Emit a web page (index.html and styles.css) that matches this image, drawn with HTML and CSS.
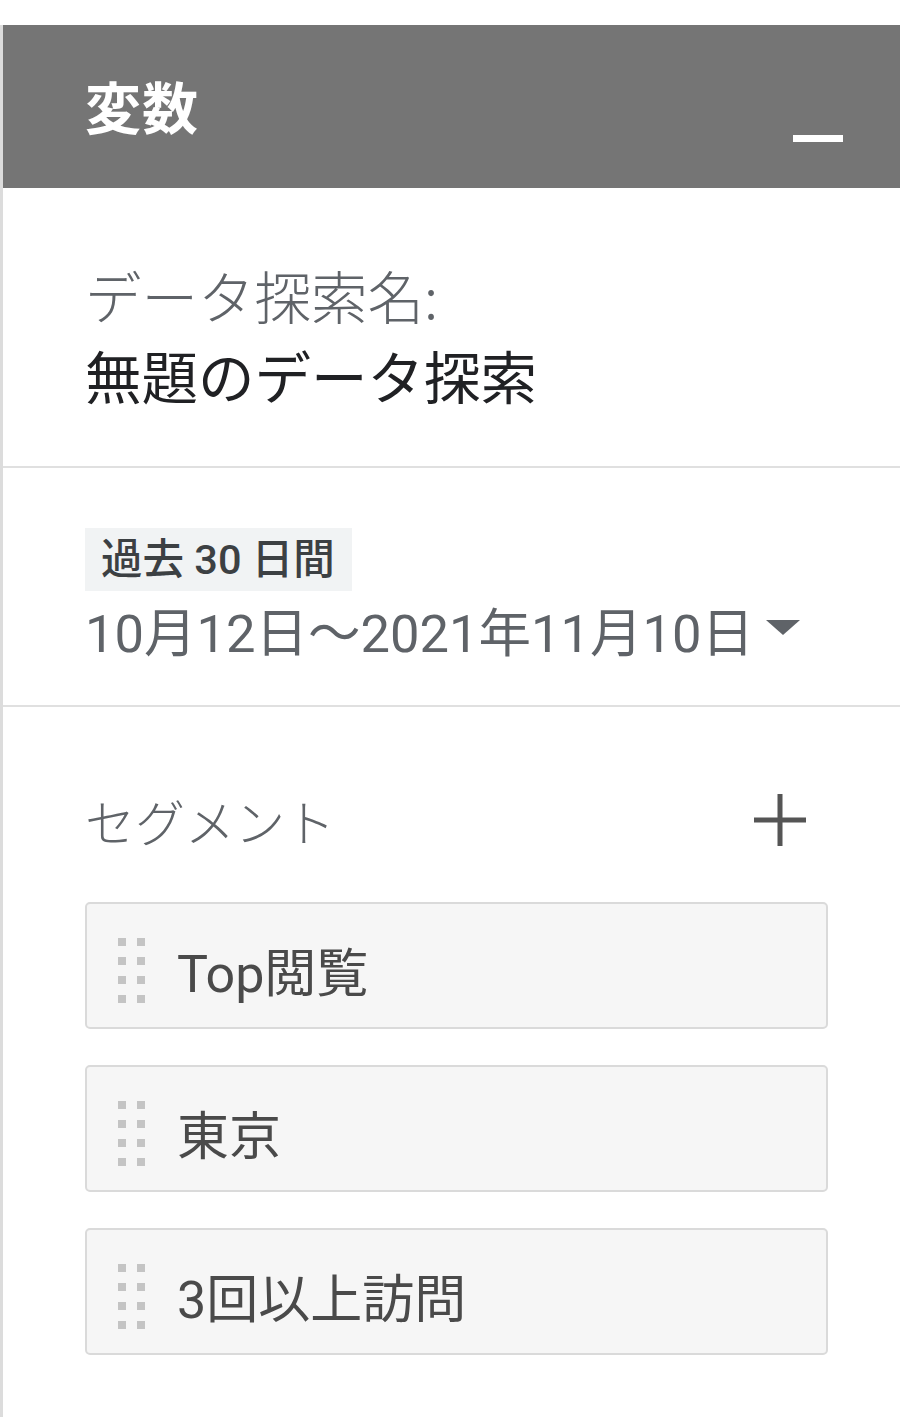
FILE: index.html
```html
<!DOCTYPE html>
<html lang="ja">
<head>
<meta charset="utf-8">
<title>変数</title>
<link rel="stylesheet" href="styles.css">
</head>
<body>
<div class="panel">
  <div class="header">
    <div class="title">変数</div>
    <div class="minimize"></div>
  </div>
  <div class="section name-section">
    <div class="label">データ探索名:</div>
    <div class="name">無題のデータ探索</div>
  </div>
  <div class="section date-section">
    <div class="chip">過去 30 日間</div>
    <div class="date">10月12日～2021年11月10日<span class="caret"></span></div>
  </div>
  <div class="section segment-section">
    <div class="seg-head">
      <div class="seg-title">セグメント</div>
      <svg class="plus" width="56" height="56" viewBox="0 0 56 56"><path d="M28 2v52M2 28h52" stroke="#555" stroke-width="5" fill="none"/></svg>
    </div>
    <div class="cards">
      <div class="card"><span class="handle"><i></i><i></i><i></i><i></i><i></i><i></i><i></i><i></i></span><span class="card-text">Top閲覧</span></div>
      <div class="card"><span class="handle"><i></i><i></i><i></i><i></i><i></i><i></i><i></i><i></i></span><span class="card-text">東京</span></div>
      <div class="card"><span class="handle"><i></i><i></i><i></i><i></i><i></i><i></i><i></i><i></i></span><span class="card-text">3回以上訪問</span></div>
    </div>
  </div>
</div>
</body>
</html>
```
FILE: styles.css
```css
html, body {
  margin: 0;
  padding: 0;
  background: #ffffff;
}
body {
  font-family: Roboto, "Noto Sans CJK JP", sans-serif;
}
.panel {
  margin-top: 25px;
  border-left: 3px solid #dcdcdc;
  min-height: 1392px;
  box-sizing: border-box;
}
.header {
  height: 163px;
  background: #757575;
  display: flex;
  justify-content: space-between;
  align-items: center;
  padding: 0 57px 0 82px;
  box-sizing: border-box;
}
.title {
  color: #ffffff;
  font-family: "Noto Sans CJK JP", sans-serif;
  font-weight: 700;
  font-size: 56px;
  line-height: 60px;
  letter-spacing: 1px;
  margin-top: -4px;
}
.minimize {
  width: 50px;
  height: 7px;
  background: #ffffff;
  align-self: flex-end;
  margin-bottom: 46px;
}
.section {
  border-bottom: 2px solid #e0e0e0;
  padding-left: 82px;
}
.name-section {
  padding-top: 66px;
  padding-bottom: 52px;
}
.label, .name {
  font-family: "Noto Sans CJK JP", sans-serif;
  font-size: 56.5px;
  line-height: 80px;
  font-weight: 300;
}
.label {
  color: #5f6368;
}
.name {
  color: #202124;
  font-weight: 400;
}
.date-section {
  padding-top: 60px;
  padding-bottom: 38px;
}
.chip {
  display: inline-block;
  background: #f1f3f4;
  color: #3c4043;
  font-size: 41.5px;
  line-height: 63px;
  padding: 0 17px 0 16px;
  font-weight: 500;
}
.date {
  color: #5f6368;
  font-size: 52.5px;
  line-height: 66px;
  display: flex;
  align-items: center;
  margin-top: 10px;
}
.caret {
  width: 0;
  height: 0;
  border-left: 17px solid transparent;
  border-right: 17px solid transparent;
  border-top: 15px solid #5f6368;
  margin-left: 12px;
  margin-top: -14px;
}
.segment-section {
  border-bottom: none;
  padding-top: 83px;
  padding-right: 72px;
}
.seg-head {
  display: flex;
  justify-content: space-between;
  align-items: center;
  height: 60px;
  padding-right: 20px;
}
.seg-title {
  color: #5f6368;
  font-family: "Noto Sans CJK JP", sans-serif;
  font-size: 50px;
  font-weight: 300;
  line-height: 60px;
}
.cards {
  margin-top: 52px;
  display: flex;
  flex-direction: column;
  gap: 36px;
}
.card {
  height: 127px;
  box-sizing: border-box;
  background: #f6f6f6;
  border: 2px solid #dadada;
  border-radius: 5px;
  display: flex;
  align-items: center;
  padding-left: 31px;
  padding-top: 10px;
}
.handle {
  display: grid;
  grid-template-columns: 8px 8px;
  column-gap: 11px;
  row-gap: 11px;
  width: 29px;
}
.handle i {
  display: block;
  width: 8px;
  height: 8px;
  background: #c4c4c4;
}
.card-text {
  margin-left: 30px;
  color: #4a4a4a;
  font-size: 52px;
  line-height: 60px;
  margin-top: 8px;
}
```
